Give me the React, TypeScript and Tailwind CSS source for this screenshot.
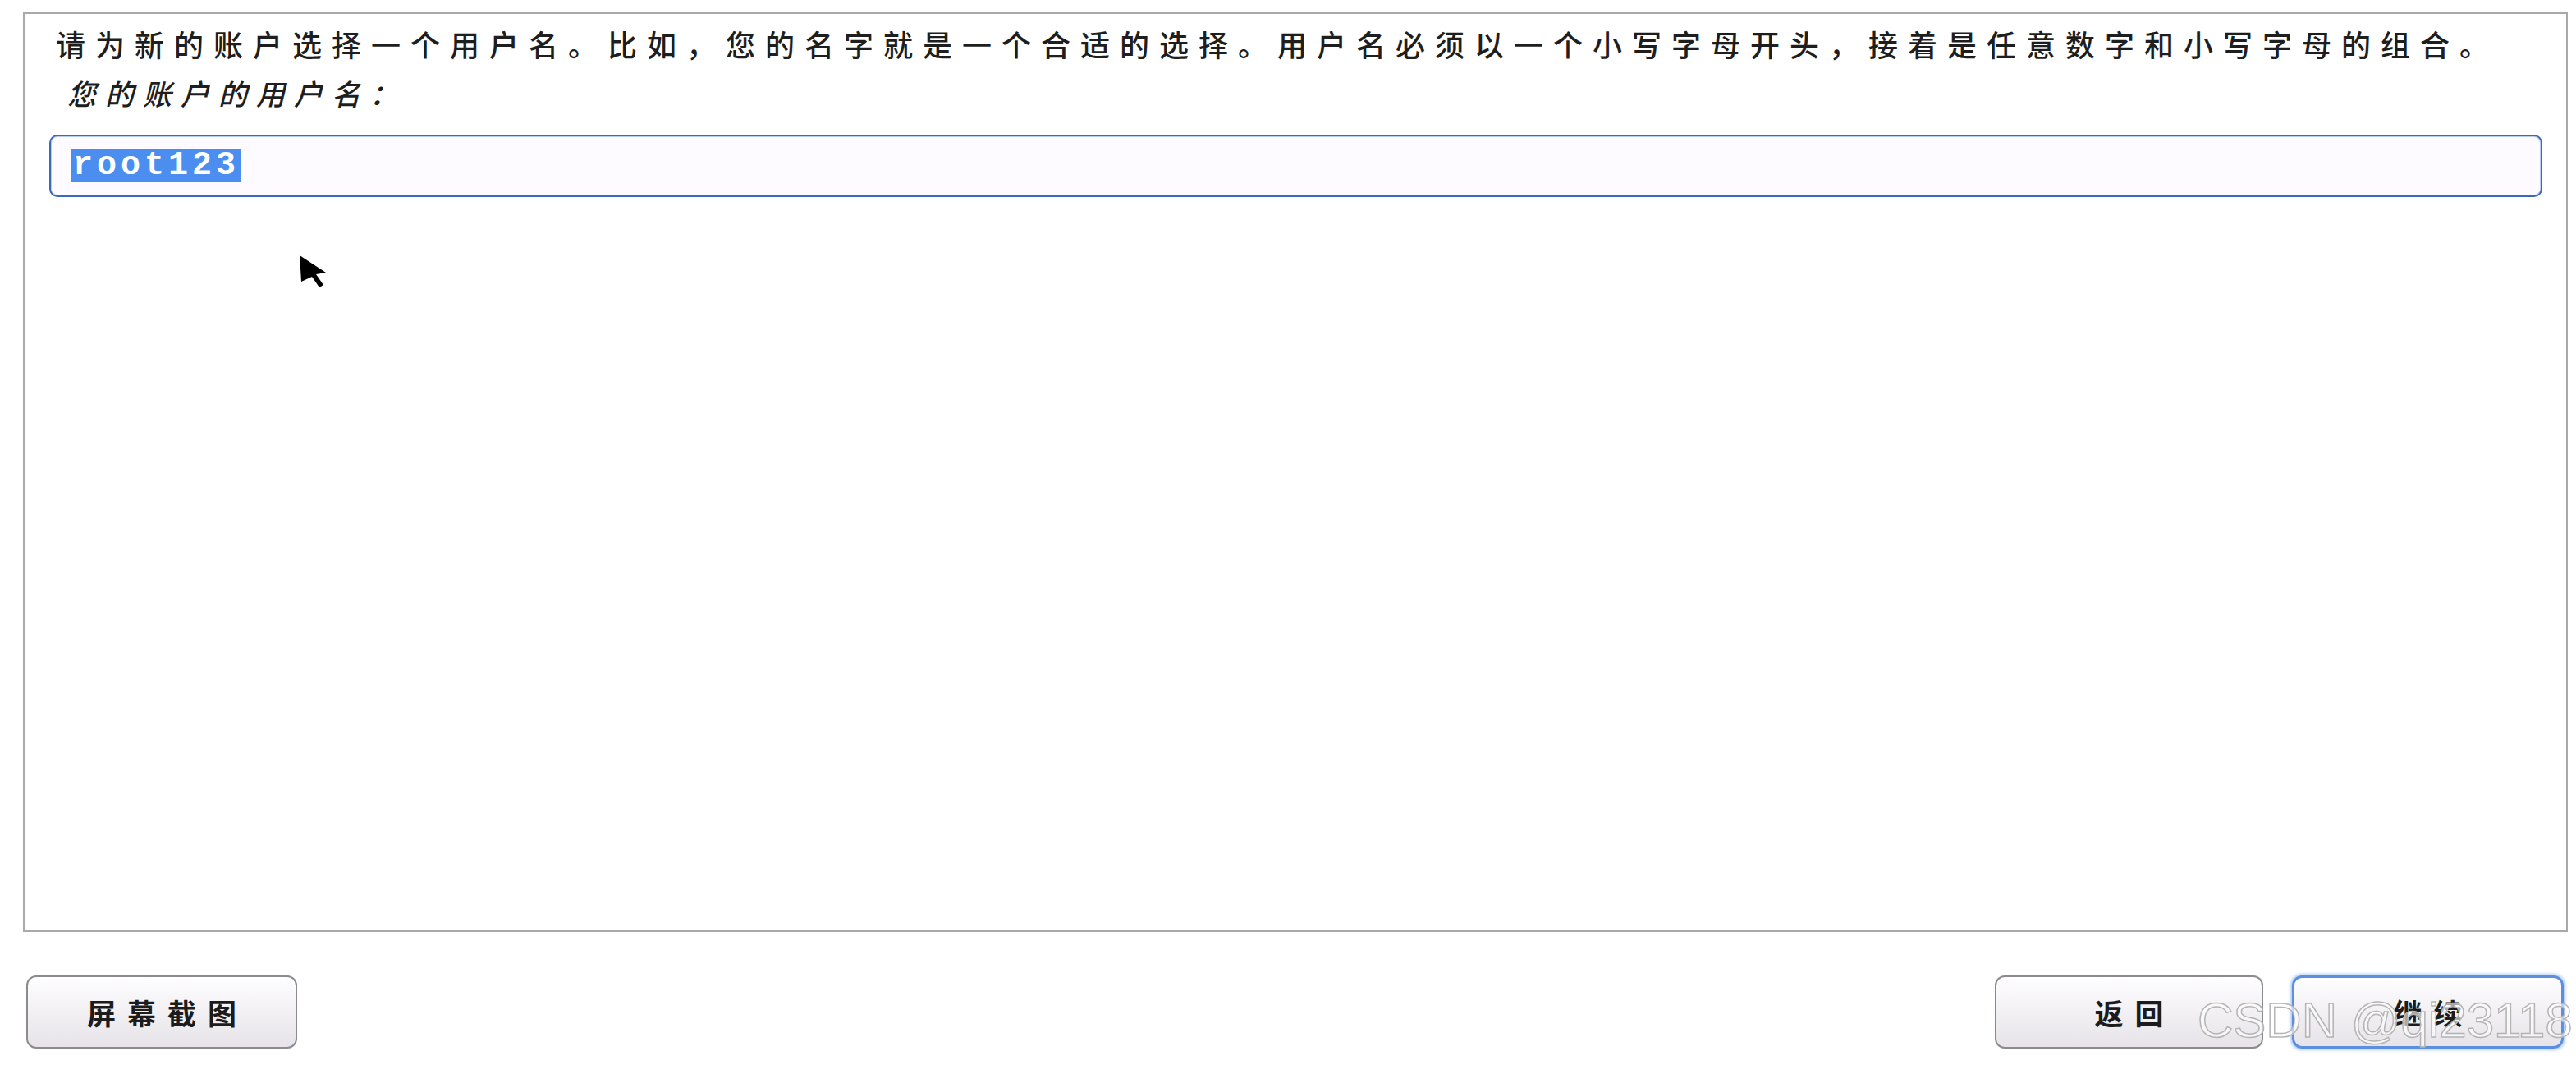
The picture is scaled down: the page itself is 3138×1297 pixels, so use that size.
import React from "react";

const cjk = { fontFamily: '"Noto Sans CJK SC", "Noto Sans CJK TC", sans-serif' };

function Btn({ label, primary, w }: { label: string; primary?: boolean; w: string }) {
  return (
    <div
      className={
        "h-[89px] flex items-center justify-center rounded-[12px] bg-gradient-to-b from-[#fefdff] via-[#f2f0f3] to-[#e6e4e8] " +
        w +
        (primary
          ? " border-[3px] border-[#5d8fe0] shadow-[0_0_4px_1px_#8db4f0]"
          : " border-2 border-[#8c8a8c]")
      }
    >
      <span
        style={cjk}
        className="text-[35px] font-bold text-[#1c1c1c] tracking-[14px] pl-[14px] leading-none"
      >
        {label}
      </span>
    </div>
  );
}

export default function App() {
  return (
    <div className="relative w-[3138px] h-[1297px] bg-white overflow-hidden">
      <div className="ml-[28px] mt-[15px] w-[3100px] h-[1120px] border-2 border-[#a9a9a9] flex flex-col">
        <div
          style={cjk}
          className="mt-[16px] ml-[38px] text-[36px] leading-[40px] tracking-[12px] font-medium text-[#1e1e1e] whitespace-nowrap"
        >
          请为新的账户选择一个用户名。比如，您的名字就是一个合适的选择。用户名必须以一个小写字母开头，接着是任意数字和小写字母的组合。
        </div>
        <div
          style={cjk}
          className="mt-[20px] ml-[52px] text-[35px] leading-[40px] tracking-[11px] italic font-medium text-[#1e1e1e] whitespace-nowrap"
        >
          您的账户的用户名：
        </div>
        <div className="mt-[31px] ml-[30px] mr-[29px] h-[76px] rounded-[10px] border-2 border-[#3a68bb] bg-[#fdfbff] shadow-[inset_0_0_0_1px_#b9cdf0] flex items-center pl-[25px]">
          <span
            style={{ fontFamily: '"Liberation Mono", monospace' }}
            className="h-[40px] flex items-center bg-[#4b8ef0] text-white font-bold text-[40px] tracking-[5px] pl-[2px] pr-[1px]"
          >
            root123
          </span>
        </div>
      </div>

      <div className="mt-[53px] flex items-center">
        <div className="ml-[32px]">
          <Btn label="屏幕截图" w="w-[330px]" />
        </div>
        <div className="ml-auto flex gap-[35px] mr-[15px]">
          <Btn label="返回" w="w-[327px]" />
          <Btn label="继续" w="w-[331px]" primary />
        </div>
      </div>

      {/* mouse pointer */}
      <svg
        className="absolute left-[364px] top-[310px]"
        width="36"
        height="42"
        viewBox="0 0 36 42"
      >
        <path d="M1 1 L33 22 L21 24 L30 37 L25 40 L16 27 L3 33 Z" fill="#000" />
      </svg>

      {/* watermark */}
      <div
        style={{ fontFamily: '"Liberation Sans", sans-serif' }}
        className="absolute left-[2677px] top-[1213px] text-[60px] leading-none text-white/60 [-webkit-text-stroke:1.5px_#b4b4b4] whitespace-nowrap"
      >
        CSDN @qi23118
      </div>
    </div>
  );
}
